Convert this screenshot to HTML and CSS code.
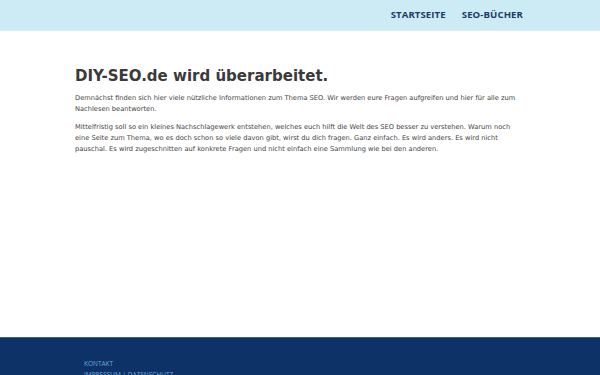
FILE: index.html
```html
<!DOCTYPE html>
<html lang="de">
<head>
<meta charset="utf-8">
<title>DIY-SEO.de</title>
<link rel="stylesheet" href="styles.css">
</head>
<body>
<header class="topbar">
  <div class="wrap nav-wrap">
    <nav class="nav">
      <a href="#">STARTSEITE</a>
      <a href="#">SEO-BÜCHER</a>
    </nav>
  </div>
</header>
<main class="wrap content">
  <h1>DIY-SEO.de wird überarbeitet.</h1>
  <p>Demnächst finden sich hier viele nützliche Informationen zum Thema SEO. Wir werden eure Fragen aufgreifen und hier für alle zum Nachlesen beantworten.</p>
  <p>Mittelfristig soll so ein kleines Nachschlagewerk entstehen, welches euch hilft die Welt des SEO besser zu verstehen. Warum noch eine Seite zum Thema, wo es doch schon so viele davon gibt, wirst du dich fragen. Ganz einfach. Es wird anders. Es wird nicht pauschal. Es wird zugeschnitten auf konkrete Fragen und nicht einfach eine Sammlung wie bei den anderen.</p>
</main>
<footer class="footer">
  <div class="wrap footer-links">
    <a href="#">KONTAKT</a>
    <a href="#">IMPRESSUM | DATENSCHUTZ</a>
  </div>
</footer>
</body>
</html>
```
FILE: styles.css
```css
html, body {
  margin: 0;
  padding: 0;
  height: 100%;
}
body {
  font-family: "DejaVu Sans", sans-serif;
  background: #ffffff;
  color: #3c3c3c;
  display: flex;
  flex-direction: column;
  min-height: 375px;
}
.wrap {
  width: 450px;
  margin: 0 auto;
}
.topbar {
  background: #cdebf5;
  height: 31px;
  border-bottom: 1px solid #dceff6;
  box-sizing: border-box;
}
.nav-wrap {
  display: flex;
  justify-content: flex-end;
  height: 100%;
  align-items: center;
}
.nav {
  display: flex;
  gap: 16px;
  padding-right: 2px;
  margin-top: -2px;
}
.nav a {
  font-family: "Open Sans", sans-serif;
  font-weight: 700;
  font-size: 9.6px;
  color: #1d3a66;
  text-decoration: none;
  letter-spacing: 0.1px;
}
.content {
  flex: 1;
  padding-top: 33px;
  box-sizing: border-box;
}
.content h1 {
  font-family: "DejaVu Sans Condensed", "DejaVu Sans", sans-serif;
  font-stretch: condensed;
  font-size: 16.7px;
  font-weight: 700;
  color: #3a3a3a;
  margin: 0 0 7px;
  line-height: 22px;
}
.content p {
  font-size: 6.68px;
  line-height: 11px;
  margin: 0 0 7px;
  color: #444444;
}
.footer {
  background: #0d3268;
  height: 38px;
  border-top: 1px solid #3f5f86;
  box-sizing: border-box;
}
.footer-links {
  display: flex;
  flex-direction: column;
  padding: 22px 9px 0;
  box-sizing: border-box;
  gap: 3px;
}
.footer-links a {
  font-family: "Open Sans", sans-serif;
  font-size: 6.5px;
  color: #62aadb;
  text-decoration: none;
  line-height: 8px;
}
```
